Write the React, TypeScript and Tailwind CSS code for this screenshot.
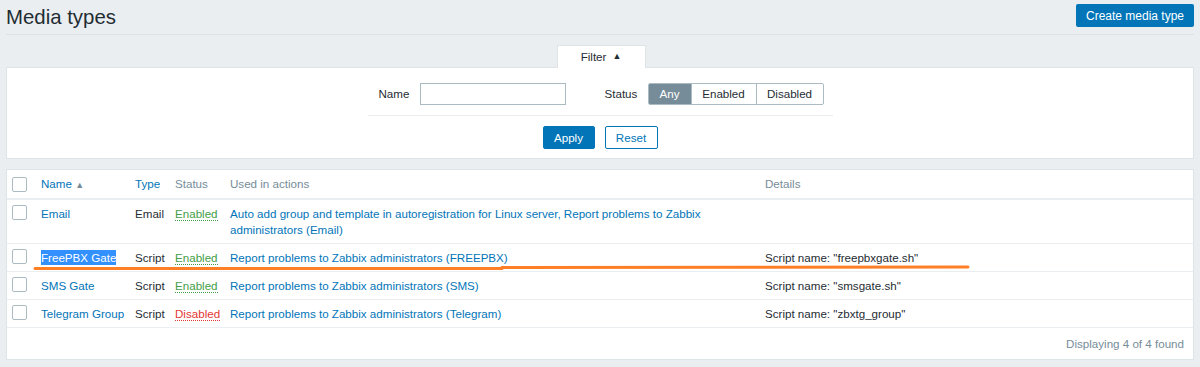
import React from 'react';

const rows = [
  {
    name: 'Email',
    type: 'Email',
    enabled: true,
    actions: 'Auto add group and template in autoregistration for Linux server, Report problems to Zabbix administrators (Email)',
    details: '',
  },
  {
    name: 'FreePBX Gate',
    type: 'Script',
    enabled: true,
    actions: 'Report problems to Zabbix administrators (FREEPBX)',
    details: 'Script name: "freepbxgate.sh"',
    selected: true,
  },
  {
    name: 'SMS Gate',
    type: 'Script',
    enabled: true,
    actions: 'Report problems to Zabbix administrators (SMS)',
    details: 'Script name: "smsgate.sh"',
  },
  {
    name: 'Telegram Group',
    type: 'Script',
    enabled: false,
    actions: 'Report problems to Zabbix administrators (Telegram)',
    details: 'Script name: "zbxtg_group"',
  },
];

function Checkbox() {
  return <div className="w-[15px] h-[15px] border border-[#acbbc2] rounded-[2px] bg-white" />;
}

export default function App() {
  return (
    <div
      className="relative w-[1200px] h-[367px] bg-[#ebeef1] px-[6px] text-[11.6px] text-[#1f2c33] overflow-hidden"
      style={{ fontFamily: '"Liberation Sans", Arial, sans-serif' }}
    >
      {/* header */}
      <div className="flex justify-between items-start h-[35px] border-b border-[#dde2e6]">
        <h1 className="text-[20.4px] leading-6 mt-[5px] text-[#1f2c33]">Media types</h1>
        <button className="mt-[4px] h-[23px] w-[118px] bg-[#0275b8] text-white rounded-[2px] leading-none text-[12px]">
          Create media type
        </button>
      </div>

      {/* filter */}
      <div className="mt-[10px] flex justify-center">
        <div className="relative z-10 -mb-px ml-[2px] w-[89px] h-[23px] bg-white border border-b-0 border-[#dfe4e7] flex items-center justify-center gap-[6px]">
          <span>Filter</span>
          <span className="text-[9px]">▲</span>
        </div>
      </div>
      <div className="bg-white border border-[#dfe4e7] h-[92px] flex flex-col items-center">
        <div className="w-[465px] pt-[15px]">
          <div className="flex items-center h-[22px]">
            <span className="ml-[11px] w-[31px]">Name</span>
            <input className="ml-[10px] w-[146px] h-[22px] border border-[#acbbc2] outline-none" />
            <span className="ml-[39px] w-[33px]">Status</span>
            <div className="ml-[10px] flex h-[22px] border border-[#acbbc2] rounded-[2px] overflow-hidden">
              <div className="w-[42px] bg-[#768d99] text-white flex items-center justify-center">Any</div>
              <div className="w-[65px] border-l border-[#acbbc2] flex items-center justify-center">Enabled</div>
              <div className="w-[67px] border-l border-[#acbbc2] flex items-center justify-center">Disabled</div>
            </div>
          </div>
          <div className="mt-[10px] border-t border-[#ebeef1]" />
          <div className="mt-[10px] flex justify-center gap-[10px]">
            <button className="w-[52px] h-[23px] bg-[#0275b8] text-white border border-[#0275b8] rounded-[2px] leading-none">
              Apply
            </button>
            <button className="w-[53px] h-[23px] bg-white text-[#0275b8] border border-[#0275b8] rounded-[2px] leading-none">
              Reset
            </button>
          </div>
        </div>
      </div>

      {/* table */}
      <div className="mt-[10px] bg-white border border-[#dfe4e7]">
        <table className="table-fixed w-full border-collapse leading-4">
          <colgroup>
            <col className="w-[28px]" />
            <col className="w-[94px]" />
            <col className="w-[40px]" />
            <col className="w-[55px]" />
            <col className="w-[535px]" />
            <col />
          </colgroup>
          <thead>
            <tr className="h-[29px] border-b-2 border-[#ebeef1] text-left">
              <th className="pl-[5px] font-normal">
                <Checkbox />
              </th>
              <th className="pl-[6px] font-normal text-[#0275b8]">
                Name <span className="text-[9px] text-[#768d99]">▲</span>
              </th>
              <th className="pl-[6px] font-normal text-[#0275b8]">Type</th>
              <th className="pl-[6px] font-normal text-[#768d99]">Status</th>
              <th className="pl-[6px] font-normal text-[#768d99]">Used in actions</th>
              <th className="pl-[6px] font-normal text-[#768d99]">Details</th>
            </tr>
          </thead>
          <tbody>
            {rows.map((r) => (
              <tr key={r.name} className="border-b border-[#ebeef1] align-top">
                <td className="pl-[5px] pt-[6px] pb-[5px]">
                  <div className="-mt-[1px]">
                    <Checkbox />
                  </div>
                </td>
                <td className="pl-[6px] pt-[6px] pb-[5px] whitespace-nowrap">
                  <span className={r.selected ? 'bg-[#3390ff] text-white py-[1px]' : 'text-[#0275b8]'}>{r.name}</span>
                </td>
                <td className="pl-[6px] pt-[6px] pb-[5px]">{r.type}</td>
                <td className="pl-[6px] pt-[6px] pb-[5px]">
                  <span
                    className={
                      r.enabled
                        ? 'text-[#429e47] border-b border-dotted border-[#429e47]'
                        : 'text-[#e33734] border-b border-dotted border-[#e33734]'
                    }
                  >
                    {r.enabled ? 'Enabled' : 'Disabled'}
                  </span>
                </td>
                <td className="pl-[6px] pr-[8px] pt-[6px] pb-[5px] text-[#0275b8]">{r.actions}</td>
                <td className="pl-[6px] pt-[6px] pb-[5px]">{r.details}</td>
              </tr>
            ))}
          </tbody>
        </table>
        <div className="h-[31px] flex items-center justify-end pr-[9px] text-[#768d99]">Displaying 4 of 4 found</div>
      </div>

      {/* hand-drawn annotation */}
      <svg className="absolute left-0 top-0 pointer-events-none" width="1200" height="367">
        <path d="M35 268.5 L502 268.5 M502 267.5 L968 267" stroke="#ff7f27" strokeWidth="3" strokeLinecap="round" fill="none" />
      </svg>
    </div>
  );
}
